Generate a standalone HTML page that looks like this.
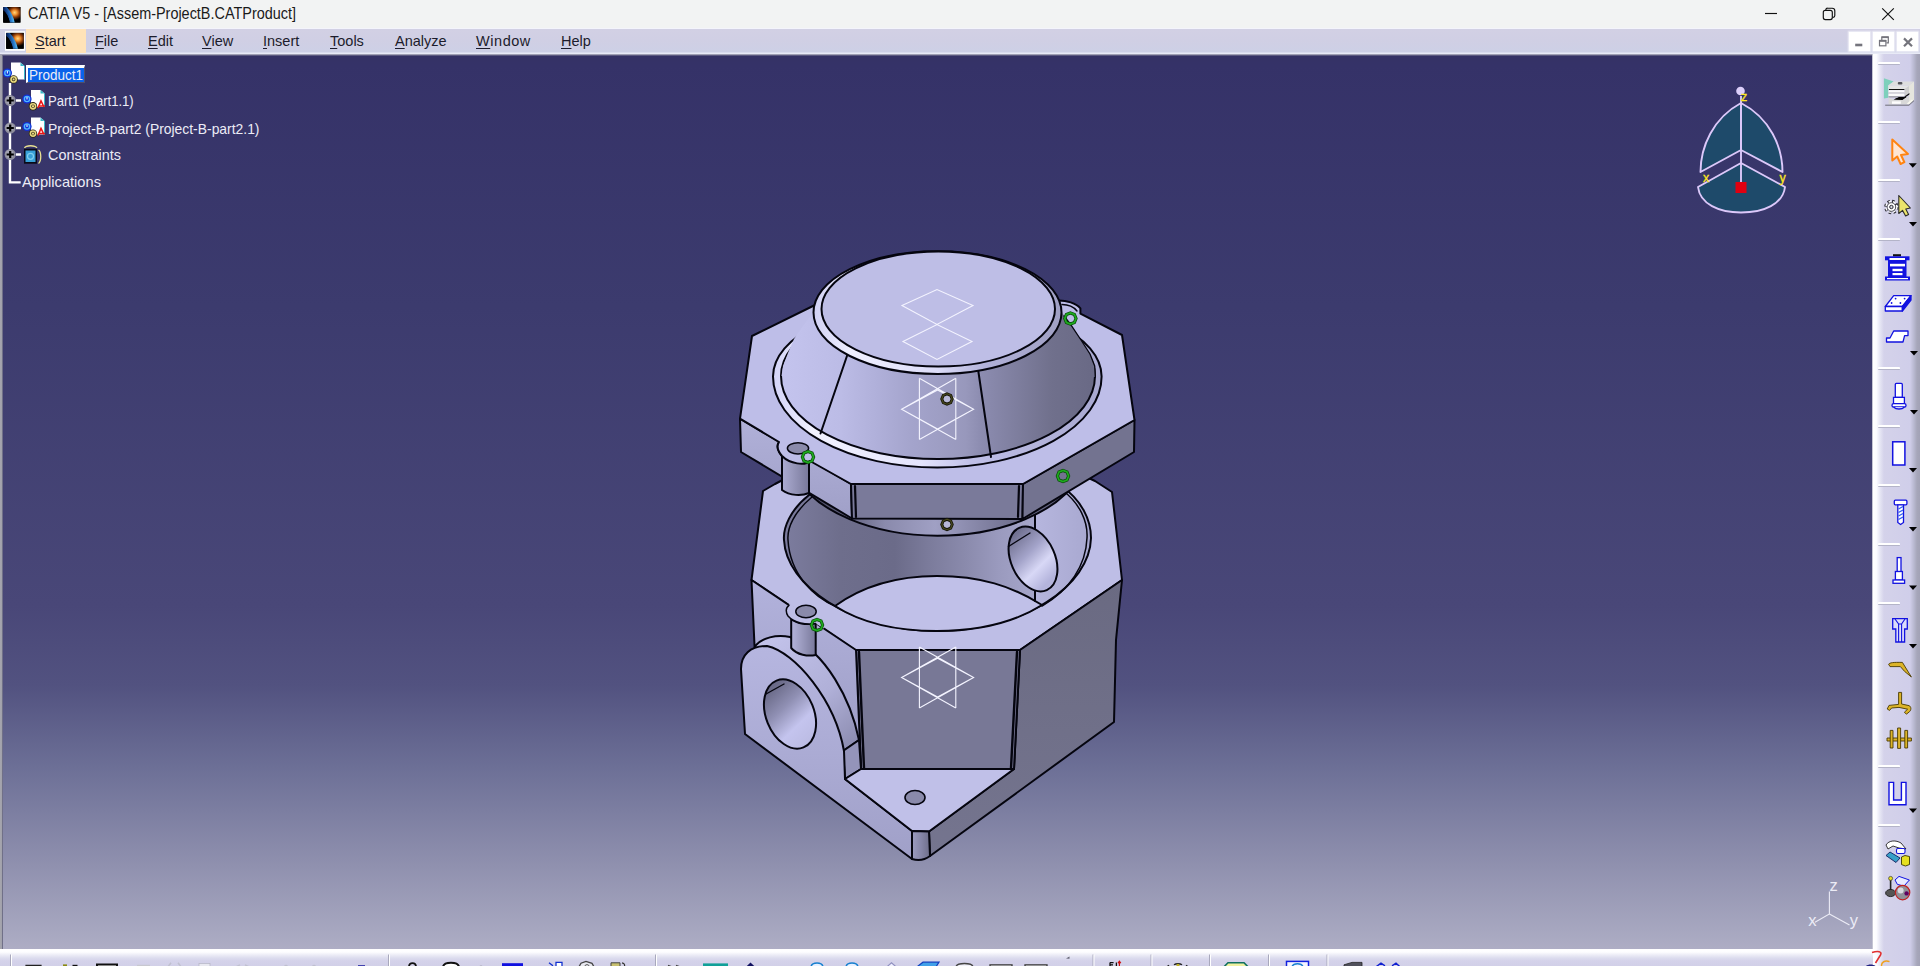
<!DOCTYPE html>
<html><head><meta charset="utf-8"><title>CATIA V5 - [Assem-ProjectB.CATProduct]</title>
<style>
*{box-sizing:border-box;margin:0;padding:0}
html,body{width:1920px;height:966px;overflow:hidden;background:#d0cfe6;font-family:"Liberation Sans",sans-serif;}
#title{position:absolute;left:0;top:0;width:1920px;height:29px;background:#f2f3f3;}
#title .t{position:absolute;left:28px;top:4.5px;font-size:15.6px;color:#1a1a1a;white-space:nowrap;transform:scaleX(0.925);transform-origin:0 0}
#menu{position:absolute;left:0;top:28px;width:1920px;height:28px;
background:linear-gradient(to bottom,#f4f4fc 0,#f4f4fc 1px,#d2d0e4 1.5px,#d0cfe4 12px,#cdd0e6 24px,#e8eaf6 25px,#e8eaf6 26px,#a0a0b4 26.5px,#5c5a80 27.5px,#35325f 28px);}
#menu .hl{position:absolute;left:26px;top:1px;width:60px;height:24px;background:#ffe3b8}
#menu span{position:absolute;top:5px;font-size:14.5px;color:#1c1c2c;white-space:nowrap}
#menu span u{text-decoration:underline;text-underline-offset:2px}
.mdi{position:absolute;top:3.8px;width:21px;height:19.6px;background:#fff;box-shadow:0 0 1.5px 1px #f0f0f8}
#view{position:absolute;left:2px;top:56px;width:1870px;height:893px;
background:linear-gradient(to bottom,#353265 0%,#353268 1%,#3c3b6e 28%,#494778 61.5%,#525280 70.5%,#6c6f96 79.5%,#8c8dac 89.5%,#aaaac2 99%,#aeadc4 100%);}
#lb{position:absolute;left:0;top:55px;width:2.5px;height:894px;background:linear-gradient(to right,#a6a6ae 0,#a0a0aa 2px,#707088 2.5px)}
#rt{position:absolute;left:1872px;top:54px;width:48px;height:912px;
background:linear-gradient(to right,#a0a0b8 0,#ffffff 1.3px,#fbfbff 4.5px,#e6e6f4 8px,#d4d2ea 12px,#d0ceea 38px,#b8b8d0 42px,#a6a6ba 45px,#a2a2b6 48px)}
#bt{position:absolute;left:0;top:949px;width:1873px;height:17px;background:linear-gradient(to bottom,#ffffff 0,#fdfdff 3px,#ececf6 6px,#dcdcee 9px,#d4d2ea 12px,#d2d0e8 17px)}
.tree{position:absolute;color:#ececf6;font-size:14.2px;white-space:nowrap;line-height:16px;transform-origin:0 0}
.sep{position:absolute;left:6px;width:22px;height:3px;background:linear-gradient(to bottom,#ffffff 0,#ffffff 1.6px,#b4b4c8 2px,#b4b4c8 3px);border-radius:1px}
</style></head><body>
<div id="title"><div class="t">CATIA V5 - [Assem-ProjectB.CATProduct]</div></div>
<div id="menu"><div class="hl"></div>
<span style="left:35px"><u>S</u>tart</span>
<span style="left:95px"><u>F</u>ile</span>
<span style="left:148px"><u>E</u>dit</span>
<span style="left:202px"><u>V</u>iew</span>
<span style="left:263px"><u>I</u>nsert</span>
<span style="left:330px"><u>T</u>ools</span>
<span style="left:395px"><u>A</u>nalyze</span>
<span style="left:476px;letter-spacing:0.55px"><u>W</u>indow</span>
<span style="left:561px"><u>H</u>elp</span>
<div class="mdi" style="left:1849px"></div><div class="mdi" style="left:1873px"></div><div class="mdi" style="left:1897px"></div>
</div>
<div id="view"></div><div id="lb"></div>
<div id="rt">
<div class="sep" style="top:7.5px"></div><div class="sep" style="top:66.5px"></div><div class="sep" style="top:125px"></div><div class="sep" style="top:183.5px"></div>
<div class="sep" style="top:312.5px"></div><div class="sep" style="top:371px"></div><div class="sep" style="top:430px"></div><div class="sep" style="top:489px"></div><div class="sep" style="top:547.5px"></div>
<div class="sep" style="top:711px"></div><div class="sep" style="top:770px"></div>
</div>
<div id="bt"></div>
<svg id="scene" width="1920" height="966" viewBox="0 0 1920 966" style="position:absolute;left:0;top:0">
<defs>
<linearGradient id="gRight" x1="0" y1="580" x2="0" y2="860" gradientUnits="userSpaceOnUse"><stop offset="0" stop-color="#6a6a82"/><stop offset="1" stop-color="#75758f"/></linearGradient>
<linearGradient id="gWall" x1="785" y1="0" x2="1090" y2="0" gradientUnits="userSpaceOnUse"><stop offset="0" stop-color="#7c7c9e"/><stop offset="0.18" stop-color="#6e6e8c"/><stop offset="0.36" stop-color="#6b6b89"/><stop offset="0.47" stop-color="#7b7b9b"/><stop offset="0.59" stop-color="#8a8aac"/><stop offset="0.7" stop-color="#9a9abe"/><stop offset="0.815" stop-color="#a6a6ca"/><stop offset="0.82" stop-color="#b6b6de"/><stop offset="1" stop-color="#a8a8d0"/></linearGradient>
<linearGradient id="gCone" x1="780" y1="0" x2="1100" y2="0" gradientUnits="userSpaceOnUse"><stop offset="0" stop-color="#c4c4ee"/><stop offset="0.19" stop-color="#bcbce6"/><stop offset="0.3" stop-color="#b0b0da"/><stop offset="0.41" stop-color="#a4a4cc"/><stop offset="0.58" stop-color="#9898bc"/><stop offset="0.63" stop-color="#8c8cb0"/><stop offset="0.74" stop-color="#7e7e9e"/><stop offset="0.85" stop-color="#70708c"/><stop offset="0.97" stop-color="#6a6a86"/><stop offset="1" stop-color="#6c6c88"/></linearGradient>
<linearGradient id="gGroove" x1="774" y1="0" x2="1102" y2="0" gradientUnits="userSpaceOnUse"><stop offset="0" stop-color="#d4d4f8"/><stop offset="0.12" stop-color="#f2f2ff"/><stop offset="0.45" stop-color="#e4e4fc"/><stop offset="0.6" stop-color="#c0c0e8"/><stop offset="1" stop-color="#a8a8d0"/></linearGradient>
<linearGradient id="gRim" x1="813" y1="0" x2="1062" y2="0" gradientUnits="userSpaceOnUse"><stop offset="0" stop-color="#d0d0f4"/><stop offset="0.15" stop-color="#f0f0ff"/><stop offset="0.5" stop-color="#dcdcf8"/><stop offset="0.7" stop-color="#b0b0d8"/><stop offset="1" stop-color="#a0a0c4"/></linearGradient>
<linearGradient id="gSpig" x1="810" y1="0" x2="1060" y2="0" gradientUnits="userSpaceOnUse"><stop offset="0" stop-color="#4c4c66"/><stop offset="0.12" stop-color="#5a5a74"/><stop offset="0.3" stop-color="#8a8aac"/><stop offset="0.5" stop-color="#a0a0c4"/><stop offset="0.75" stop-color="#7a7a9a"/><stop offset="1" stop-color="#5c5c76"/></linearGradient>
<linearGradient id="gPin" x1="0" y1="0" x2="1" y2="0"><stop offset="0" stop-color="#b4b4dc"/><stop offset="0.45" stop-color="#9a9abe"/><stop offset="1" stop-color="#78789a"/></linearGradient>
<linearGradient id="gHole" x1="768" y1="692" x2="812" y2="738" gradientUnits="userSpaceOnUse"><stop offset="0" stop-color="#6a6a88"/><stop offset="0.35" stop-color="#9090b4"/><stop offset="0.7" stop-color="#c4c4ee"/><stop offset="1" stop-color="#bcbce4"/></linearGradient>
<linearGradient id="gHole2" x1="1012" y1="538" x2="1052" y2="578" gradientUnits="userSpaceOnUse"><stop offset="0" stop-color="#727292"/><stop offset="0.4" stop-color="#a4a4ca"/><stop offset="0.7" stop-color="#d8d8f6"/><stop offset="1" stop-color="#b4b4dc"/></linearGradient>
<linearGradient id="gLug" x1="0" y1="645" x2="0" y2="860" gradientUnits="userSpaceOnUse"><stop offset="0" stop-color="#b6b6e0"/><stop offset="1" stop-color="#a0a0c8"/></linearGradient>
<linearGradient id="gBand" x1="770" y1="640" x2="860" y2="745" gradientUnits="userSpaceOnUse"><stop offset="0" stop-color="#c2c2ea"/><stop offset="0.55" stop-color="#b0b0d8"/><stop offset="1" stop-color="#8a8aae"/></linearGradient>
<linearGradient id="gFil" x1="912" y1="0" x2="930" y2="0" gradientUnits="userSpaceOnUse"><stop offset="0" stop-color="#9c9cc0"/><stop offset="0.5" stop-color="#8686a8"/><stop offset="1" stop-color="#6e6e8a"/></linearGradient>
<linearGradient id="gPF" x1="0" y1="420" x2="0" y2="518" gradientUnits="userSpaceOnUse"><stop offset="0" stop-color="#b0b0d8"/><stop offset="1" stop-color="#a0a0c8"/></linearGradient>
<linearGradient id="gLF" x1="0" y1="580" x2="0" y2="770" gradientUnits="userSpaceOnUse"><stop offset="0" stop-color="#b2b2dc"/><stop offset="1" stop-color="#9c9cc4"/></linearGradient>
<g id="mk"><path d="M0,-5.6 L4,-4 L5.6,0 L4,4 L0,5.6 L-4,4 L-5.6,0 L-4,-4 Z" fill="none" stroke-width="3.2" stroke="#0a4a0a"/><path d="M0,-5.6 L4,-4 L5.6,0 L4,4 L0,5.6 L-4,4 L-5.6,0 L-4,-4 Z" fill="none" stroke-width="1.7" stroke="#1eaa1e"/></g>
<g id="mkd"><path d="M0,-5.2 L3.7,-3.7 L5.2,0 L3.7,3.7 L0,5.2 L-3.7,3.7 L-5.2,0 L-3.7,-3.7 Z" fill="#b8b8d8" stroke-width="3" stroke="#16160a"/><path d="M0,-5.2 L3.7,-3.7 L5.2,0 L3.7,3.7 L0,5.2 L-3.7,3.7 L-5.2,0 L-3.7,-3.7 Z" fill="none" stroke-width="1.2" stroke="#4a4a20"/></g>
</defs>
<g stroke="#05050f" stroke-width="2" stroke-linejoin="round" stroke-linecap="round">
<!-- ===== LOWER BODY ===== -->
<path d="M775,484 L763,491 L751.5,580 L855,650 L1020,650 L1122,580 L1112,492 L1095,481 L1040,455 L830,455 Z" fill="#bebee6"/>
<!-- bore wall -->
<path d="M809,495 C790,510 783,528 784,540 C786,585 850,631 937,631 C1025,631 1090,585 1091,538 C1091,520 1082,500 1060,485 L1040,470 L830,470 Z" fill="url(#gWall)"/>
<path d="M812,497 C794,512 787,528 788,540 C790,575 815,598 835,606" fill="none" stroke-width="1.5"/>
<path d="M1062,490 C1080,503 1088,522 1087,538 C1086,565 1070,590 1042,606" fill="none" stroke-width="1.5"/>
<!-- floor -->
<path d="M835,606 C860,588 895,576 937,576 C980,576 1012,586 1042,605 C1015,622 980,631 937,631 C895,631 860,622 835,606 Z" fill="#c0c0e8"/>
<!-- wall cut line + side hole -->
<path d="M1035,515 L1035,601" fill="none"/>
<path d="M1019.2,527.9 A22,34 -24 1 0 1046.8,590.1 A22,34 -24 1 0 1019.2,527.9 Z" fill="url(#gHole2)"/>
<path d="M1008.5,546.5 L1030,533" fill="none" stroke-width="1.4"/>
<!-- right face + base side -->
<path d="M1020,650 L1122,580 L1116,640 L1114,722 L930,856 L929,831.5 L1014,769 Z" fill="url(#gRight)"/>
<!-- front face -->
<path d="M856,650 L1020,650 L1014,769 L861,769 Z" fill="#787896"/>
<path d="M859,652 L864,768 M1017,652 L1011,768" fill="none" stroke-width="2.4"/>
<!-- left front facet -->
<path d="M751.5,580 L856,650 L861,769 L845,779 L757,700 Z" fill="url(#gLF)"/>
<!-- lug band (thickness) -->
<path d="M755,646 C762,638 776,634 790,637 C826,652 851,700 859,740 L843,751 L820,730 L770,665 Z" fill="url(#gBand)"/>
<path d="M843,751 L859,740 L861,769 L845,779 Z" fill="#9494ba"/>
<!-- lower pin / ear -->
<path d="M791.2,619 L791.2,648 C797,655 808,656.5 815.7,655 L815.7,623 C806,625.5 796,623 791.2,619 Z" fill="url(#gPin)"/>
<path d="M789,605.3 C785,608 786,613 788,616 C794,623 806,625 815.7,623.5 L823.7,628.5 L824.6,627 L789.6,603.6 Z" fill="#bebee6" stroke="none"/>
<path d="M789,605.3 C785,608 786,613 788,616 C794,623 806,625 815.7,623.5" fill="none" stroke-width="1.5"/>
<ellipse cx="806" cy="611.5" rx="10.2" ry="6.2" fill="#8a8aaa" stroke-width="1.5"/>
<!-- lug front + base left side -->
<path d="M745,734 L741,669 C741,655 750,646 767,646 C795,652 835,700 844,751 L845,779 L912,831 L912,859 Z" fill="url(#gLug)"/>
<!-- lug hole -->
<path d="M776.5,680.6 A24,36 -22 1 0 803.5,747.4 A24,36 -22 1 0 776.5,680.6 Z" fill="url(#gHole)"/>
<path d="M766,694 L784,684" fill="none" stroke-width="1.4"/>
<!-- base top -->
<path d="M845,779 L861,769 L1014,769 L929,831.5 L912,831 Z" fill="#c0c0e8"/>
<ellipse cx="915" cy="797.5" rx="10" ry="7" fill="#8a8aaa" stroke-width="1.6"/>
<!-- corner fillet -->
<path d="M912,831 L929,831.5 L930,856 C924,860.5 917,860.5 912,859 Z" fill="url(#gFil)"/>
<!-- ===== UPPER PLATE ===== -->
<path d="M795,475.8 A150,87 0 0 0 1080,475.8 L1080,440 L795,440 Z" fill="url(#gSpig)"/>
<!-- side faces -->
<path d="M740,418.6 L851,484 L852,518.5 L741,452 Z" fill="url(#gPF)"/>
<path d="M851,484 L1023,484 L1022.5,519 L852,518.5 Z" fill="#7a7a9a"/>
<path d="M855,486 L856,517 M1019,486 L1018,517" fill="none" stroke-width="2.2"/>
<path d="M1023,484 L1134.5,420 L1134,452 L1022.5,519 Z" fill="#737390"/>
<!-- upper pin boss -->
<path d="M779,442 C776,446 778,452 782,456 L782,490 C790,496 802,496 809,493 L809,461 L790,440 Z" fill="url(#gPin)"/>
<!-- top face -->
<path d="M752,336 L815,305 L1059,300.5 C1066,300.5 1076,303 1080.4,308.3 L1080.4,313.6 L1122,335 L1134.5,420 L1023,484 L851,484 L810,461 C805,466 790,464 782,456 C777,450 777,445 779,442 L740,418.6 Z" fill="#bebee8"/>
<path d="M1062,304.5 C1068,304.5 1073,306 1077,311" fill="none" stroke-width="1.4"/>
<ellipse cx="798" cy="448.3" rx="10.6" ry="5.6" fill="#8a8aaa" stroke-width="1.5"/>
<!-- groove -->
<path d="M773,376.5 A164.3,76.3 0 0 1 1101.6,376.5 A164.3,91 0 0 1 773,376.5 Z" fill="url(#gGroove)"/>
<path d="M781,376 A157,78 0 0 1 1095,376 A157,83 0 0 1 781,376 Z" fill="url(#gCone)"/>
<!-- dome -->
<path d="M813.5,312 L803,326 L794,339 L788,353 L783,366 L781.5,376 L1095.3,377 L1094.7,366 L1090,354 L1081,340 L1070.6,324.4 L1061.5,312 Z" fill="url(#gCone)" stroke="none"/>
<path d="M1064,316 L1070.6,324.4 L1081,340 L1090,354 L1094.7,366 L1095.3,377" fill="none" stroke-width="1.3"/>
<path d="M848.5,351.5 L820.5,433.5 M978,369 L991,457" fill="none"/>
<!-- top disc -->
<ellipse cx="937.5" cy="312.6" rx="124" ry="61.4" fill="url(#gRim)"/>
<ellipse cx="938.25" cy="309" rx="116.75" ry="57.5" fill="#bebee6"/>
</g>
<!-- symbols -->
<g fill="none" stroke="#f4f4ff" stroke-width="1.1">
<path d="M902,305.6 L937,289.5 L973,305.6 L937,324.5 Z M903,341.5 L937,324.5 L972,341.5 L937,359.5 Z"/>
<path d="M919.4,378.3 V439.5 M955.8,378.3 V439.5 M919.4,378.3 L973.6,409.3 L919.4,439.5 M955.8,378.3 L901.6,409.3 L955.8,439.5 M901.6,409.3 L937.6,390 L973.6,409.3 L937.6,429 Z"/>
<path d="M919.4,647 V708 M955.8,647 V708 M919.4,647 L973.6,677.5 L919.4,708 M955.8,647 L901.6,677.5 L955.8,708 M901.6,677.5 L937.6,658.3 L973.6,677.5 L937.6,697 Z"/>
</g>
<!-- constraint markers -->
<use href="#mk" x="1070.4" y="318.5"/><use href="#mk" x="808" y="457"/><use href="#mk" x="1063" y="476"/><use href="#mk" x="817" y="625"/>
<use href="#mkd" x="947" y="399"/><use href="#mkd" x="947" y="524.5"/>
</svg>

<div style="position:absolute;left:26px;top:65px;width:59px;height:18px;background:#0a62ea;border-top:3px solid #fff;border-left:2.5px solid #fff;border-right:1px solid #50506a;border-bottom:1.5px solid #50506a"></div>
<div class="tree" style="left:29px;top:67px;transform:scaleX(0.95)">Product1</div>
<div class="tree" style="left:48px;top:93.3px;transform:scaleX(0.921)">Part1 (Part1.1)</div>
<div class="tree" style="left:48px;top:120.8px;transform:scaleX(0.979)">Project-B-part2 (Project-B-part2.1)</div>
<div class="tree" style="left:48px;top:146.5px;transform:scaleX(1.017)">Constraints</div>
<div class="tree" style="left:21.5px;top:174.3px;transform:scaleX(1.032)">Applications</div>
<svg width="1920" height="966" viewBox="0 0 1920 966" style="position:absolute;left:0;top:0;pointer-events:none">
<defs>
<radialGradient id="sun" cx="0.66" cy="0.36" r="0.5"><stop offset="0" stop-color="#ffd880"/><stop offset="0.3" stop-color="#f09030"/><stop offset="0.6" stop-color="#883808"/><stop offset="0.9" stop-color="#180800"/><stop offset="1" stop-color="#000"/></radialGradient>
<linearGradient id="band" x1="0" y1="0.6" x2="1" y2="0.4"><stop offset="0.2" stop-color="#0c2c6c"/><stop offset="0.6" stop-color="#2a78c8"/><stop offset="0.85" stop-color="#58b8f0"/></linearGradient>
<g id="appicon"><rect x="0" y="0" width="17.4" height="15.8" fill="#000"/><rect x="0" y="0" width="17.4" height="15.8" fill="url(#sun)"/><path d="M0,0 L3.6,0 C7.5,4.5 10.5,10 11.6,15.8 L6.6,15.8 C5.6,10.6 3.4,6 0,3.2 Z" fill="url(#band)"/><path d="M0,3.2 C3.4,6 5.6,10.6 6.6,15.8 L0,15.8 Z" fill="#000"/></g>
<g id="dd"><path d="M0,0 L8,0 L4,4.5 Z" fill="#000"/></g>
<g id="plus"><circle cx="0" cy="0" r="5.6" fill="#8c8c9c"/><circle cx="-0.6" cy="-0.6" r="4" fill="#a4a4b2"/><path d="M-3.6,0 H3.6 M0,-3.6 V3.6" stroke="#000" stroke-width="2.2"/></g>
<g id="doc"><path d="M0,0 H9.5 L13.5,3.5 V17 H0 Z" fill="#fff"/><path d="M9.5,0 L13.5,3.5 H9.5 Z" fill="#38b8c8"/><path d="M13.5,3.5 V17" stroke="#38b8c8" stroke-width="1"/></g>
<g id="bgear"><circle r="4.6" fill="#1030d8"/><circle r="2.6" fill="none" stroke="#50b8ff" stroke-width="1.4"/><path d="M0,-2 V0.5" stroke="#d8e8ff" stroke-width="1.2"/></g>
<g id="ygear"><circle r="4.2" fill="#282410"/><circle r="2.6" fill="none" stroke="#e8d880" stroke-width="1.6"/><rect x="-1" y="-1" width="2" height="2" fill="#e8d880"/></g>
</defs>
<!-- app icons -->
<rect x="5" y="31.2" width="20" height="19.6" fill="#fff"/>
<use href="#appicon" x="6.3" y="32.9"/>
<rect x="2.6" y="6.2" width="18.6" height="17" fill="#fbfbfb"/><g transform="translate(3.3,7) scale(0.985)"><use href="#appicon"/></g>
<!-- window controls -->
<g fill="none" stroke="#111" stroke-width="1.15">
<path d="M1765,13.5 H1777"/>
<path d="M1825.8,10 V9.8 A1.8,1.8 0 0 1 1827.6,8.2 H1832.2 A2.6,2.6 0 0 1 1834.8,10.8 V15.6 A1.8,1.8 0 0 1 1833,17.4 H1832.6" />
<rect x="1823.3" y="10.3" width="9" height="9.3" rx="2"/>
<path d="M1882.2,8.3 L1893.8,19.8 M1893.8,8.3 L1882.2,19.8"/>
</g>
<!-- MDI glyphs -->
<g fill="none" stroke="#74747c">
<path d="M1855.2,45 H1862.3" stroke-width="2.6"/>
<path d="M1881.8,40 V37.2 H1888.3 V42.8 H1886.4" stroke-width="1.2"/><path d="M1881.6,37.2 H1888.6" stroke-width="1.8"/>
<rect x="1879.5" y="40.6" width="6.4" height="5.2" stroke-width="1.2"/><path d="M1879.2,40.8 H1886.2" stroke-width="2"/>
<path d="M1904,38.4 L1912,46.2 M1912,38.4 L1904,46.2" stroke-width="2.2"/>
</g>
<!-- tree lines -->
<g stroke="#fff" stroke-width="2.4" fill="none"><path d="M10,83 V182.4 H20.7"/><path d="M16,100.5 H21 M16,128 H21 M16,154.5 H21"/></g>
<use href="#plus" x="10.2" y="100.5"/><use href="#plus" x="10.2" y="128"/><use href="#plus" x="10.2" y="154.5"/>
<!-- tree icons -->
<use href="#doc" x="11" y="62.5"/><use href="#bgear" x="7.4" y="73"/><use href="#ygear" x="13.6" y="79.4"/>
<use href="#doc" x="31" y="90"/><use href="#bgear" x="27" y="99"/><use href="#ygear" x="33" y="106.3"/><path d="M38,108 L41,101 L44,107 M39,106 H45" stroke="#e81818" stroke-width="1.6" fill="none"/>
<use href="#doc" x="31" y="117.5"/><use href="#bgear" x="27" y="126.5"/><use href="#ygear" x="33" y="133.6"/><path d="M38,135.5 L41,128.5 L44,134.5 M39,133.5 H45" stroke="#e81818" stroke-width="1.6" fill="none"/>
<rect x="24" y="148.7" width="13" height="15" fill="#0a0a18"/><rect x="25.5" y="150.5" width="10" height="11.5" fill="#38a0d8"/><circle cx="30.5" cy="156.3" r="3" fill="none" stroke="#80d0f0" stroke-width="1.2"/>
<path d="M24.5,148 C26,145 35,145 37,148 M38.5,150 C41.5,152 41.5,161 38.5,163.5" stroke="#e8e090" stroke-width="1.3" fill="none"/>
<!-- compass -->
<g stroke="#dcc8fa" stroke-width="1.9" fill="#1e4a6a" stroke-linejoin="round">
<path d="M1741,103 C1713,118 1700.5,147 1700.5,172 L1741,150 Z"/>
<path d="M1741,103 C1770,118 1782.5,147 1782.5,172 L1741,150 Z"/>
<path d="M1741,163 L1698,187 C1700,204 1719,212.5 1741,212.5 C1764,212.5 1783,204 1785,187 Z"/>
<path d="M1741,96 V183" fill="none"/>
</g>
<circle cx="1740.5" cy="91" r="4.3" fill="#dccffa"/>
<rect x="1735.5" y="182" width="11" height="11" fill="#e00010"/>
<g font-family="Liberation Sans, sans-serif" font-size="12.5" fill="#ffe820" stroke="#ffe820" stroke-width="0.3"><text x="1741" y="100.6">z</text><text x="1703" y="182.4">x</text><text x="1779.4" y="182.4">y</text></g>
<!-- axis -->
<g stroke="#ececf6" stroke-width="1.1" fill="none"><path d="M1829.4,891.5 V914 L1815,922.3 M1829.4,914 L1849.5,925"/></g>
<g font-family="Liberation Sans, sans-serif" font-size="16.5" fill="#ececf6"><text x="1829.6" y="891.2">z</text><text x="1808.2" y="926.4">x</text><text x="1849.8" y="926.4">y</text></g>
<!-- ===== right toolbar icons ===== -->
<!-- 1 assembly workbench -->
<path d="M1883.9,78.2 L1893.7,81.5 L1888.3,85.2 V97.7 L1883.9,98.5 Z" fill="#7ed0bc"/>
<path d="M1888.3,85.6 L1893.7,81.5 H1914 L1909,85.6 Z" fill="#dedede"/>
<path d="M1909,85.6 L1914,81.5 V100.2 L1909,104.6 Z" fill="#e6e6de"/>
<rect x="1888.3" y="85.6" width="20.7" height="3.4" fill="#e4e4e4"/>
<rect x="1889" y="89" width="15.6" height="1" fill="#111"/>
<rect x="1888.6" y="90.2" width="16" height="2.5" fill="#fbfbfb"/><rect x="1888.6" y="92.7" width="16" height="0.8" fill="#9a9a9a"/>
<rect x="1888.6" y="93.5" width="16" height="2.5" fill="#fbfbfb"/>
<path d="M1904.6,89 L1909,86 V93.4 L1904.6,96.4 Z" fill="#cfcfcf"/>
<path d="M1904.4,96.6 L1909.4,93 V94.6 L1904.4,98 Z" fill="#111"/>
<path d="M1888.6,96.4 H1904.6 V97.4 H1888.6 Z" fill="#8a8a8a"/>
<path d="M1893.7,99.6 L1899.5,96.9 H1906.5 L1902.4,99.9 Z" fill="#050505"/>
<path d="M1888.6,97.4 L1893.7,99.6 H1902.4 L1906.5,96.9 L1909,96 V104.6 H1888.6 Z" fill="#d8d8d8"/>
<path d="M1893.7,99.6 L1899.5,96.9 H1906.5 L1902.4,99.9 Z" fill="#050505"/>
<rect x="1892" y="101.3" width="8.8" height="2.5" fill="#fdfdfd"/>
<path d="M1906.6,103.8 L1911.4,99.8 L1913.4,100 L1908.6,104 Z" fill="#fafaf0"/>
<path d="M1885.2,105.2 H1909 L1914,100.6" stroke="#6e6e78" stroke-width="1" fill="none"/>
<rect x="1897.8" y="82" width="4.6" height="2.4" rx="1" fill="#55555c"/>
<!-- 2 select arrow -->
<path d="M1892.3,139.5 V160.5 L1897.2,156.5 L1900.6,164 L1904.4,162.2 L1901,155 L1908,154 Z" fill="#ffe6d4" stroke="#ff8412" stroke-width="2" stroke-linejoin="round"/>
<use href="#dd" x="1908.8" y="163.2"/>
<!-- 3 gear + cursor -->
<g transform="translate(1891.4,207)"><circle r="5.6" fill="none" stroke="#2a2a34" stroke-width="3.2" stroke-dasharray="2.3 2.1"/><circle r="5.4" fill="none" stroke="#fff" stroke-width="1.6" stroke-dasharray="2.3 2.1"/><circle r="4.3" fill="#fff" stroke="#3a3a44" stroke-width="0.8"/><circle r="1.7" fill="#d8d8e4" stroke="#2a2a34" stroke-width="1"/></g>
<path d="M1898.8,195.5 V213.5 L1902.6,210.4 L1905.6,216 L1908.6,214.4 L1905.8,209 L1910.4,208 Z" fill="#ebe46c" stroke="#2c2c2c" stroke-width="1.1" stroke-linejoin="round"/>
<use href="#dd" x="1909" y="222"/>
<!-- 4 blue stack -->
<g fill="#1212e0"><rect x="1893" y="254.2" width="8" height="2.2" fill="#111"/><rect x="1885" y="256.3" width="24.5" height="4"/><rect x="1888" y="260" width="18.5" height="17"/><rect x="1885" y="276.5" width="25" height="4"/></g>
<g fill="#fff"><rect x="1889.5" y="258" width="15.5" height="2"/><rect x="1890" y="263.8" width="15" height="2.6"/><rect x="1892.5" y="268.8" width="10" height="2.4"/><rect x="1892.5" y="273" width="10" height="2.2"/><rect x="1887" y="278" width="21" height="1.2"/></g>
<!-- 5 dotted slab -->
<g stroke="#1212e0" stroke-width="1.3" stroke-linejoin="round"><path d="M1893.7,295.6 H1911 L1902.4,306.5 H1885.3 Z" fill="#fff"/><path d="M1885.3,306.5 H1902.4 V311 H1885.3 Z" fill="#fff"/><path d="M1902.4,306.5 L1911,295.6 V300 L1902.4,311 Z" fill="#1212e0"/></g>
<g fill="#1212e0"><circle cx="1895.6" cy="298.6" r="0.9"/><circle cx="1904.6" cy="298.6" r="0.9"/><circle cx="1891.6" cy="303" r="0.9"/><circle cx="1900.4" cy="303" r="0.9"/></g>
<!-- 6 slab -->
<path d="M1893.7,331 H1908 V335.6 H1904.6 L1903,342 H1886.5 V338 H1890 Z" fill="#fff" stroke="#1212e0" stroke-width="1.3" stroke-linejoin="round"/>
<use href="#dd" x="1910" y="351"/>
<!-- 7 bolt -->
<g fill="#fff" stroke="#1212e0" stroke-width="1.3"><rect x="1895.3" y="383.4" width="7" height="14" rx="1"/><path d="M1893.5,397.4 H1904.4 V404 H1893.5 Z"/><rect x="1892" y="403.6" width="14" height="3.4" rx="1.6"/><path d="M1893.8,407.2 C1896,409.6 1902,409.6 1904.2,407.2"/></g>
<use href="#dd" x="1910" y="410"/>
<!-- 8 rect -->
<rect x="1892.7" y="441.8" width="12.2" height="23.2" fill="#fff" stroke="#1212e0" stroke-width="1.5"/>
<use href="#dd" x="1909" y="468"/>
<!-- 9 screw -->
<g stroke="#1212e0" stroke-width="1.3" fill="#fff"><rect x="1894.3" y="500.2" width="12.6" height="4.6" rx="1"/><path d="M1897.8,504.8 H1903.5 V522.5 L1900.6,524.5 L1897.8,522.5 Z"/></g>
<path d="M1898.5,509 L1903,506.5 M1898.5,512.5 L1903,510 M1898.5,516 L1903,513.5 M1898.5,519.5 L1903,517" stroke="#3060f0" stroke-width="1.4"/>
<use href="#dd" x="1909" y="527"/>
<!-- 10 pin -->
<g stroke="#1212e0" stroke-width="1.3" fill="#fff"><rect x="1897.2" y="557.6" width="3.8" height="14"/><rect x="1895.4" y="571.5" width="7" height="8.6"/><rect x="1893" y="580" width="11.6" height="3.3"/></g>
<use href="#dd" x="1909" y="585.6"/>
<!-- 11 T -->
<path d="M1892.7,618.6 H1907.3 V629 H1904.6 V642 H1895.8 V629 H1892.7 Z" fill="#dcdcfa" stroke="#1212e0" stroke-width="1.3"/>
<path d="M1898.6,642 V624 L1895,619 M1901.6,642 V624 L1905,619 M1898.6,624 H1901.6" stroke="#1212e0" stroke-width="1.1" fill="none"/>
<use href="#dd" x="1909" y="644"/>
<!-- 12-14 yellow -->
<g fill="#dcb428" stroke="#4a3a00" stroke-width="0.9" stroke-linejoin="round">
<path d="M1888.6,664.2 C1890,662.6 1893,662.2 1902.4,662.4 L1911.4,677 L1904.6,671.4 L1900.4,666.6 H1890 Z"/>
<path d="M1898.6,692.4 H1901.6 V704 L1909,705.6 C1911.4,706.6 1911.4,710 1909.6,711.6 L1906.4,714.2 L1904.4,712.2 L1907.6,709.2 L1899,707.4 L1891.6,708 L1889.6,710.4 L1887.2,709 L1889,705.4 L1898.6,704.4 Z"/>
<path d="M1887,738 H1911.4 V741 H1887 Z"/><rect x="1890.2" y="730.4" width="2.8" height="17.6"/><rect x="1897.6" y="728" width="3" height="20.4"/><rect x="1904.8" y="730.4" width="2.8" height="17.6"/>
</g>
<!-- 15 U -->
<path d="M1889,782.4 H1893.6 V800 H1901.4 V782.4 H1906 V804.8 H1889 Z" fill="#fff" stroke="#1212e0" stroke-width="1.4"/>
<use href="#dd" x="1909" y="808.6"/>
<!-- 16 hand/manipulate -->
<path d="M1886,845 C1889,840 1896,840 1901,843 L1906,849 L1899,848 L1893,846 L1888,849 Z" fill="#fff" stroke="#222" stroke-width="0.9"/>
<rect x="1896.5" y="848.5" width="8.5" height="5" rx="1.4" fill="#fff" stroke="#1212e0" stroke-width="1.1"/>
<path d="M1886,855.5 L1890,852 L1900,858 L1896,862.5 Z" fill="#38a0c8" stroke="#102060" stroke-width="0.9"/>
<path d="M1901.5,857 L1905,855.5 L1909.5,856.5 V864.5 L1905.5,866 L1901.5,864.6 Z" fill="#e6e020" stroke="#3a3a00" stroke-width="0.9"/>
<!-- 17 joystick -->
<path d="M1895,880 L1899,876.4 L1909.4,880 L1904,886 L1897.4,884.4 Z" fill="#e8ecff" stroke="#1212e0" stroke-width="1"/>
<path d="M1890.6,878 V890" stroke="#222" stroke-width="1.6"/><circle cx="1890.6" cy="878.4" r="2" fill="#e8e020" stroke="#222" stroke-width="0.6"/>
<ellipse cx="1890.6" cy="893" rx="5" ry="3.6" fill="#555" stroke="#111" stroke-width="0.8"/>
<circle cx="1902.6" cy="892.6" r="7.2" fill="#909098" stroke="#c02020" stroke-width="1.2"/><circle cx="1900.6" cy="890.6" r="3" fill="#d8d8e0"/><circle cx="1906.6" cy="893.4" r="2.2" fill="#600060"/>
<!-- DS logo peek -->
<path d="M1872,952.5 C1878,950.5 1882.5,951.5 1880.5,955 L1875.5,963" stroke="#e03030" stroke-width="1.6" fill="none"/>
<path d="M1889.5,961.6 C1885,960.2 1881,962 1881.6,966" stroke="#f0a020" stroke-width="1.5" fill="none"/>
<path d="M1866,966 C1868,964 1873,964 1875.5,966 Z" fill="#202080"/>
<!-- bottom toolbar peeks -->
<g fill="none">
<path d="M10.5,954.5 V966 M388.5,954.5 V966 M655.5,954.5 V966 M1093,954.5 V966 M1151,954.5 V966 M1209.5,954.5 V966 M1268.5,954.5 V966 M1327,954.5 V966" stroke="#a8a8bc" stroke-width="1"/>
<path d="M11.5,954.5 V966 M389.5,954.5 V966 M656.5,954.5 V966 M1094,954.5 V966 M1152,954.5 V966 M1210.5,954.5 V966 M1269.5,954.5 V966 M1328,954.5 V966" stroke="#fff" stroke-width="1"/>
</g>
<g transform="translate(0,0.8)">
<path d="M26,966 V964.6 H41 V966" stroke="#222" stroke-width="1.2" fill="#fff"/>
<rect x="63" y="963.6" width="4" height="2.4" fill="#8a8a10"/><rect x="72.5" y="964" width="5" height="2" fill="#111"/>
<path d="M97,966 V963.6 H117 V966" stroke="#111" stroke-width="2" fill="#fff"/>
<rect x="137" y="964" width="13" height="2" fill="#c8c8d0"/><path d="M168,966 L171,962 M181,966 L178,962" stroke="#c0c0d0" stroke-width="1.5"/><rect x="199" y="962.6" width="11" height="3.4" fill="#e8e8f0" stroke="#b8b8c8" stroke-width="0.8"/>
<path d="M236,966 L240,964 M245,964 L249,966" stroke="#c0c0d0" stroke-width="1.4"/><circle cx="286" cy="966" r="2" fill="#c0c0d0"/><circle cx="314" cy="966" r="2" fill="#c0c0d0"/>
<rect x="358" y="964.4" width="7" height="1.6" fill="#2020a0"/>
<path d="M409,966 C409,961 416,961 416,966" stroke="#111" stroke-width="1.8" fill="none"/>
<path d="M443,966 C444,960.6 458,960.6 459,966" stroke="#111" stroke-width="2" fill="#fff"/>
<circle cx="481" cy="966" r="1.6" fill="#b0b0c0"/>
<rect x="502" y="962.4" width="21" height="3.6" fill="#1010e0"/>
<path d="M549,962 L553,965 M556,961.6 H562 V966 H556 Z" stroke="#1030d0" stroke-width="1.3" fill="#fff"/>
<path d="M579,966 L581,962.4 L586,960.6 L592,962.6 L594,966" stroke="#444" stroke-width="1.3" fill="#e8e8f0"/><circle cx="587" cy="966" r="2.2" fill="none" stroke="#555" stroke-width="1"/>
<path d="M611,962 H620 V966 H611 Z" fill="#c8c070" stroke="#444" stroke-width="1"/><path d="M622,962 C625,962.6 625,965 624,966" stroke="#333" stroke-width="1.2" fill="none"/>
<path d="M668,964.6 L672,966 M676,964.6 L680,966" stroke="#444" stroke-width="1.2"/>
<rect x="703" y="962.6" width="25" height="3.4" fill="#10a098"/>
<path d="M746,966 L750.5,961.6 L755,966 Z" fill="#101060"/>
<path d="M811,966 C812,961 822,961 823,966" stroke="#1880d0" stroke-width="1.5" fill="#e8f0ff"/>
<path d="M846,966 C847,961 857,961 858,966" stroke="#1880d0" stroke-width="1.5" fill="#e8f0ff"/>
<path d="M887,966 L891.5,962 L896,966" stroke="#9090c0" stroke-width="1.2" fill="#f0f0ff"/>
<path d="M917,966 L923,961.4 H939 L936,966 Z" fill="#40a0e8" stroke="#1040c0" stroke-width="1.2"/>
<path d="M956,966 C957,961.6 972,961.6 973,966" stroke="#444" stroke-width="1.4" fill="#f0f0f8"/>
<path d="M990,966 V964 H1012 V966" stroke="#333" stroke-width="1.3" fill="#f4f4f8"/><path d="M1025,966 V964 H1047 V966" stroke="#333" stroke-width="1.3" fill="#f4f4f8"/>
<path d="M1066,957.6 L1069.5,955.6 V958 Z" fill="#606070"/>
<path d="M1110,961.6 V966 M1110,961.8 H1113.6 M1110,964 H1113 M1116.4,961.6 V966" stroke="#111" stroke-width="1.3" fill="none"/><path d="M1119.4,960.6 V966 M1118,962.4 L1119.4,960.4 L1120.8,962.4" stroke="#d01010" stroke-width="1.2" fill="none"/>
<path d="M1167,966 L1169,964.4 M1174,964 C1176,962.6 1180,962.6 1182,964 M1186,964.6 L1188,966" stroke="#222" stroke-width="1.4" fill="none"/><circle cx="1178" cy="964.6" r="1.6" fill="#c0b020"/>
<path d="M1224,966 L1228,962 H1244 L1248,966 Z" fill="#f0f0a0" stroke="#107060" stroke-width="1.6"/>
<rect x="1286.5" y="960.6" width="22" height="6" fill="#f4f4ff" stroke="#1020e0" stroke-width="1.5"/><path d="M1292,966 C1293,962 1302,962 1303,966" stroke="#1880d0" stroke-width="1.4" fill="none"/>
<path d="M1344,966 V964 L1352,961.6 H1362 V966 Z" fill="#50505c" stroke="#222" stroke-width="0.8"/>
<path d="M1376,966 L1381,962.4 L1385,965 M1392,965 L1396,962.4 L1400,966" stroke="#1020d0" stroke-width="1.4" fill="none"/>
</g>
</svg>


</body></html>
